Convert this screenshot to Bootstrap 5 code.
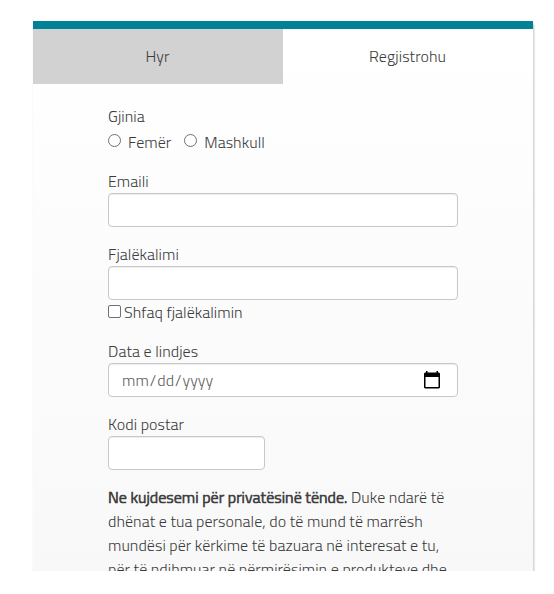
<!DOCTYPE html>
<html lang="sq">
<head>
<meta charset="utf-8">
<meta name="viewport" content="width=device-width, initial-scale=1">
<title>Regjistrohu</title>
<link href="https://cdn.jsdelivr.net/npm/bootstrap@5.3.0/dist/css/bootstrap.min.css" rel="stylesheet">
<style>
body{background:#fff;color:#3c3c3c;font:300 16px/24px "Titillium Web",Roboto,sans-serif;letter-spacing:.04px;overflow:hidden}
.panel-wrap{width:554px;height:571px;overflow:hidden}
.panel{width:500px;height:560px;margin:21px 0 0 33px;border-top:8px solid #008196;background:linear-gradient(#fff,#f8f8f8);box-shadow:1px 3px 2px rgba(0,0,0,.24)}
.tab-item{height:55px;padding:0 1px 2px 0;color:#3c3c3c;text-decoration:none}
.tab-off{background:#d2d2d2}
.signup{width:350px;margin:22px 0 0 75px}
.field{margin-bottom:17px}
.field-label{display:block;line-height:20px;height:22px}
.field .form-control{height:34px;border:1px solid #c8c8c8;border-radius:4px;padding:0 12px;background:#fff;color:#606060;font-weight:300;box-shadow:inset 0 1px 1px rgba(0,0,0,.075)}
.field .zip-box{width:157px}
.choice{height:24px;margin-top:2px}
.field .form-check-input{width:13px;height:13px;margin:0;border:1px solid #707070;background:#fff}
.field .form-check-input[type=checkbox]{border-radius:2px;margin:0 3px 2px 0}
.choice .form-check-input{margin-bottom:4px}
.choice label{margin:0 13px 0 7px}
.date-part{padding:0 1px}
.cal{margin-right:5px}
.privacy{margin-top:-2px;white-space:nowrap}
.privacy b{font-weight:300;-webkit-text-stroke:.7px #3c3c3c}
.privacy span{display:block}
</style>
<script src="https://cdn.jsdelivr.net/npm/bootstrap@5.3.0/dist/js/bootstrap.bundle.min.js"></script>
</head>
<body>
<div class="panel-wrap d-flow-root">
<main class="panel">
  <nav class="row g-0 text-center">
    <a href="#" class="col-6 tab-item tab-off d-flex align-items-center justify-content-center">Hyr</a>
    <a href="#" class="col-6 tab-item d-flex align-items-center justify-content-center">Regjistrohu</a>
  </nav>
  <form class="signup">
    <div class="field">
      <span class="field-label">Gjinia</span>
      <div class="choice d-flex align-items-center">
        <input class="form-check-input" type="radio" name="g" id="f"><label for="f">Femër</label>
        <input class="form-check-input" type="radio" name="g" id="m"><label for="m">Mashkull</label>
      </div>
    </div>
    <div class="field"><label class="field-label" for="e">Emaili</label><input id="e" class="form-control"></div>
    <div class="field"><label class="field-label" for="p">Fjalëkalimi</label><input id="p" type="password" class="form-control">
      <div class="d-flex align-items-center"><input class="form-check-input" type="checkbox" id="s"><label for="s">Shfaq fjalëkalimin</label></div>
    </div>
    <div class="field"><span class="field-label">Data e lindjes</span>
      <div class="form-control d-flex align-items-center justify-content-between"><span><span class="date-part">mm</span>/<span class="date-part">dd</span>/<span class="date-part">yyyy</span></span>
      <svg class="cal" width="16" height="18" viewBox="0 0 16 18"><path d="M2 0h1.5v1.5h9V0H14v1.5h1l1 1v14l-1 1H1l-1-1v-14l1-1h1zM1.5 6v10h13V6z" fill="#000" fill-rule="evenodd"/></svg></div>
    </div>
    <div class="field"><label class="field-label" for="z">Kodi postar</label><input id="z" class="form-control zip-box"></div>
    <p class="privacy"><span><b>Ne kujdesemi për privatësinë tënde.</b> Duke ndarë të</span> <span>dhënat e tua personale, do të mund të marrësh</span> <span>mundësi për kërkime të bazuara në interesat e tu,</span> <span>për të ndihmuar në përmirësimin e produkteve dhe</span></p>
  </form>
</main>
</div>
</body>
</html>
